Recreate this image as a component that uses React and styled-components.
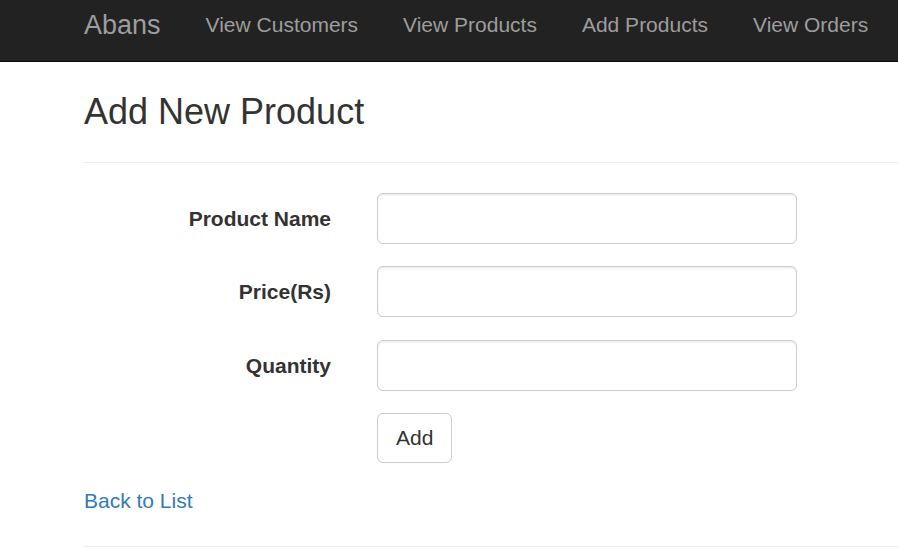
import React from "react";
import styled, { createGlobalStyle } from "styled-components";

const GlobalStyle = createGlobalStyle`
  html, body {
    margin: 0;
    padding: 0;
    overflow: hidden;
    background: #fff;
  }
  body {
    font-family: "Liberation Sans", Arial, Helvetica, sans-serif;
    font-size: 21px;
    line-height: 30px;
    color: #333;
  }
  * { box-sizing: border-box; }
`;

const Navbar = styled.nav`
  background: #222;
  border-bottom: 1px solid #080808;
  height: 62px;
  padding-top: 10px;
`;

const Container = styled.div`
  margin-left: 61.5px;
  padding: 0 0 0 22.5px;
`;

const NavInner = styled.div`
  display: flex;
  align-items: flex-start;
`;

const Brand = styled.a`
  display: block;
  font-size: 27px;
  line-height: 30px;
  color: #9d9d9d;
  text-decoration: none;
  padding-right: 22.5px;
`;

const NavList = styled.ul`
  display: flex;
  list-style: none;
  margin: 0;
  padding: 0;
`;

const NavLink = styled.a`
  display: block;
  padding: 0 22.5px;
  font-size: 21px;
  line-height: 30px;
  color: #9d9d9d;
  text-decoration: none;
  white-space: nowrap;
`;

const Heading = styled.h2`
  font-size: 36px;
  font-weight: 500;
  line-height: 1.1;
  margin: 30px 0 0;
  color: #333;
`;

const Rule = styled.hr`
  border: 0;
  border-top: 1.5px solid #eee;
  margin: 30px 0 ${(p) => (p.$last ? "0" : "30px")};
`;

const Form = styled.form`
  margin: 0;
`;

const FormGroup = styled.div`
  display: grid;
  grid-template-columns: 247px 1fr;
  column-gap: 46px;
  margin-bottom: 22.5px;
`;

const Label = styled.label`
  grid-column: 1;
  text-align: right;
  font-weight: 700;
  padding-top: 11px;
  line-height: 30px;
`;

const Input = styled.input`
  grid-column: 2;
  display: block;
  width: 420px;
  height: 51px;
  padding: 9px 18px;
  font-family: inherit;
  font-size: 21px;
  color: #555;
  background: #fff;
  border: 1.5px solid #ccc;
  border-radius: 6px;
  box-shadow: inset 0 1.5px 1.5px rgba(0, 0, 0, 0.075);
  outline: none;
`;

const Button = styled.button`
  grid-column: 2;
  justify-self: start;
  height: 50px;
  padding: 9px 18px;
  font-family: inherit;
  font-size: 21px;
  line-height: 30px;
  color: #333;
  background: #fff;
  border: 1.5px solid #ccc;
  border-radius: 6px;
  cursor: pointer;
`;

const BackLink = styled.a`
  display: block;
  color: #337ab7;
  text-decoration: none;
  line-height: 30px;
`;

const fields = [
  { id: "name", label: "Product Name" },
  { id: "price", label: "Price(Rs)" },
  { id: "qty", label: "Quantity" },
];

export default function App() {
  return (
    <>
      <GlobalStyle />
      <Navbar>
        <Container>
          <NavInner>
            <Brand href="#">Abans</Brand>
            <NavList>
              {["View Customers", "View Products", "Add Products", "View Orders"].map((t) => (
                <li key={t}>
                  <NavLink href="#">{t}</NavLink>
                </li>
              ))}
            </NavList>
          </NavInner>
        </Container>
      </Navbar>
      <Container>
        <Heading>Add New Product</Heading>
        <Rule />
        <Form onSubmit={(e) => e.preventDefault()}>
          {fields.map((f) => (
            <FormGroup key={f.id}>
              <Label htmlFor={f.id}>{f.label}</Label>
              <Input id={f.id} type="text" />
            </FormGroup>
          ))}
          <FormGroup>
            <Button type="submit">Add</Button>
          </FormGroup>
        </Form>
        <BackLink href="#">Back to List</BackLink>
        <Rule $last />
      </Container>
    </>
  );
}
